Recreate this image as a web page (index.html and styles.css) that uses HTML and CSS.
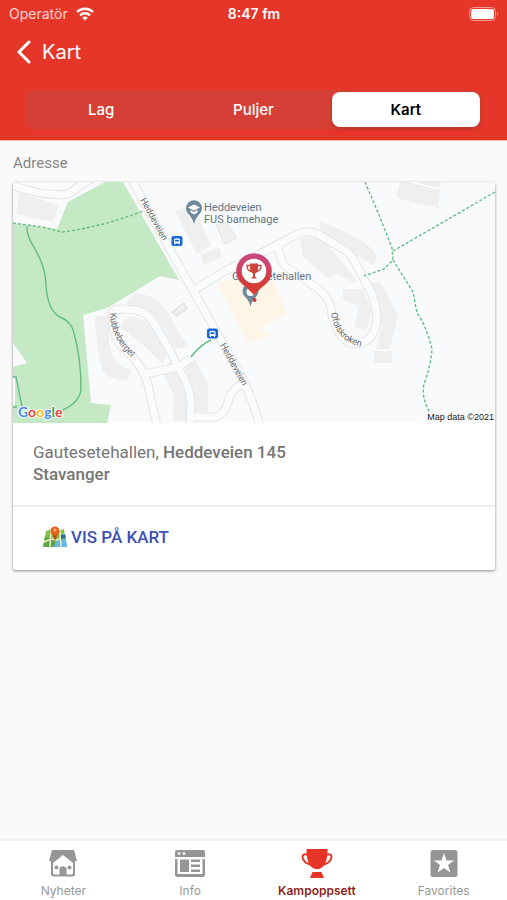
FILE: index.html
```html
<!DOCTYPE html>
<html lang="no">
<head>
    <meta charset="UTF-8">
    <meta name="viewport" content="width=device-width, initial-scale=1.0">
    <title>Kart</title>
    <link rel="stylesheet" href="styles.css">
</head>
<body>
    <header class="header">
        <div class="status-bar">
            <div class="operator">
                <span>Operatör</span>
                <svg width="18" height="14" viewBox="0 0 18 14" fill="none" stroke="#fff" stroke-width="2.4">
                    <path d="M1 5a11.500 11.500 0 0 1 16 0"/>
                    <path d="M4 8.300a7.200 7.200 0 0 1 10 0"/>
                    <path d="M9 13.500L6.200 10.800a4 4 0 0 1 5.600 0z" fill="#fff" stroke="none"/>
                </svg>
            </div>
            <div class="clock">8:47 fm</div>
            <div class="battery">
                <svg width="30" height="14" viewBox="0 0 30 14">
                    <rect x="0.500" y="0.500" width="26" height="13" rx="4" fill="none" stroke="#f4a097"/>
                    <rect x="2" y="2" width="23" height="10" rx="2.500" fill="#fff"/>
                    <path d="M28 5q2 2 0 4z" fill="#f4a097"/>
                </svg>
            </div>
        </div>
        <div class="title-bar">
            <a href="#" class="back" aria-label="Tilbake">
                <svg width="16" height="24" viewBox="0 0 16 24" fill="none" stroke="#fff" stroke-width="3" stroke-linecap="round" stroke-linejoin="round">
                    <path d="M13 2L3 12L13 22"/>
                </svg>
            </a>
            <h1>Kart</h1>
        </div>
        <div class="segments">
            <button type="button">Lag</button>
            <button type="button">Puljer</button>
            <button type="button" class="active">Kart</button>
        </div>
    </header>

    <main class="content">
        <h2>Adresse</h2>
        <div class="card">
            <svg class="map" viewBox="13 182 482 241">
                <defs>
                    <linearGradient id="ring" x1="0" y1="0" x2="0" y2="1">
                        <stop offset="0" stop-color="#c9477f"/>
                        <stop offset="1" stop-color="#d63c35"/>
                    </linearGradient>
                    <path id="kubbe" d="M110 313Q110 341 140 365"/>
                    <path id="ofols" d="M331 313C334 334 345 346 372 348"/>
                    <g id="roads">
                        <path d="M131 178L153 219L190 285L235 365Q250 390 260 426"/>
                        <path d="M196 289Q222 271 252 258L292 237Q308 227 321 236L345 250Q352 255 357 266L372 294Q384 328 366 341Q352 348 343 338Q334 329 330 304Q325 292 310 283L286 267Q281 262 278 246"/>
                        <path d="M114 317Q109 309 122 309Q145 309 152 320L168 347L179 369Q191 388 191 404L190 426"/>
                        <path d="M113 316Q111 341 132 356Q143 368 148 385L157 426"/>
                        <path d="M145 374L178 367L190 359"/>
                        <path d="M191 417H216Q225 414 228 402Q232 386 245 384"/>
                        <path d="M10 184Q32 194 63 195Q70 194 78 187L92 178"/>
                    </g>
                </defs>
                <rect x="13" y="182" width="482" height="241" fill="#f8fafc"/>

                <!-- parks -->
                <path fill="#c5e8c5" d="M13 223L57 229L68 202L105 182H123L179 280L160 276L137 290L107 308L83 315L91 403L111 405L107 423H13V406L15 404V377H13V367L27 363L13 343Z"/>

                <!-- buildings -->
                <g fill="#efefef">
                    <path d="M19 193L59 205L53 222L16 214Z"/>
                    <path d="M175 211L193 204L211 246L197 254Z"/>
                    <path d="M200 254L219 248L222 257L203 265Z"/>
                    <path d="M216 225L226 222L237 238L225 244Z" stroke="#e2e2e2"/>
                    <path d="M126 303L135 293Q155 295 165 308L188 347L175 349L156 317Q145 307 126 306Z"/>
                    <path d="M95 317L109 315V340Q110 365 132 370L127 381Q106 379 102 369Q96 348 95 317Z"/>
                    <path d="M119 326L130 316L146 320L167 352L163 364Q144 344 119 326Z"/>
                    <path d="M172 312L184 303L187 309L177 316Z" stroke="#dcdcdc"/>
                    <path d="M164 374L176 372L187 393L186 421H173L174 396Z"/>
                    <path d="M184 365L195 360L208 384V412H194V391Z"/>
                    <path d="M299 238L322 237L357 281L354 283L338 274L327 278L303 256Z"/>
                    <path d="M321 221L345 232Q373 245 377 257L373 265L349 251L318 235Z"/>
                    <path d="M343 289H363L373 312L366 330L354 327L359 306L343 300Z"/>
                    <path d="M371 283L380 281L398 315L390 349H376L382 326Z"/>
                    <path d="M374 351H392V363H374Z"/>
                    <path d="M400 182H440L439 208L396 198Z"/>
                </g>
                <path fill="#fef5e6" d="M218 284L250 272L272 276L287 313L260 329L271 336L247 343Z"/>

                <!-- roads, casing first -->
                <use href="#roads" fill="none" stroke="#e4e5e7" stroke-width="9"/>
                <use href="#roads" fill="none" stroke="#fafbfc" stroke-width="7"/>
                <path d="M411 182L438 189Q445 185 441 182" fill="none" stroke="#dedfe1" stroke-width="3"/>
                <path d="M411 182L438 189Q445 185 441 182" fill="none" stroke="#fff" stroke-width="2"/>

                <!-- paths -->
                <g fill="none" stroke="#63bd82" stroke-width="1.400">
                    <path d="M27 226Q26 235 35 249Q46 268 46 286Q48 311 60 317Q71 321 74 333Q81 358 81 389Q80 402 63 410"/>
                    <path d="M13 377H16L22 407M13 407H17"/>
                    <path d="M191 357Q200 345 211 340"/>
                    <g stroke-dasharray="3 2">
                        <path d="M13 223L42 227L62 232Q102 227 143 211"/>
                        <path d="M365 182L379 215L392 248L393 260L384 269L364 276"/>
                        <path d="M495 192L393 251"/>
                        <path d="M393 260L413 292L417 313Q426 325 432 349Q431 365 424 384Q421 397 430 413"/>
                    </g>
                </g>

                <!-- bus stops -->
                <g id="stop">
                    <rect x="171.500" y="236" width="11" height="10" rx="2" fill="#1967d2"/>
                    <path d="M174 243.500V239Q177 237.500 180 239V243.500Z" fill="#fff"/>
                    <path d="M175 239.700H179V241.500H175Z" fill="#1967d2"/>
                    <path d="M175 244.500V243M179 244.500V243" stroke="#fff"/>
                </g>
                <use href="#stop" x="35.500" y="92.500"/>

                <!-- place pins -->
                <path fill="#6f8b9b" d="M194 224Q192 217 188 213.500A8 8 0 1 1 200 213.500Q196 217 194 224Z"/>
                <path fill="#fff" d="M188 207.500L194 204.500L200 207.500L194 210.500ZM190.500 210L194 212L197.500 210V212.500L194 214.500L190.500 212.500Z"/>
                <path fill="#6f8b9b" d="M250.500 306.500Q249 300 245 297A8 8 0 1 1 256 297Q252 300 250.500 306.500Z"/>
                <circle cx="250.500" cy="292" r="4" fill="#fff"/>

                <!-- labels -->
                <g class="place">
                    <text x="204" y="211">Heddeveien</text>
                    <text x="204" y="223">FUS barnehage</text>
                    <text x="232" y="280">Gautesetehallen</text>
                </g>
                <g class="street">
                    <text x="140" y="200" transform="rotate(61 140 200)">Heddeveien</text>
                    <text x="220" y="345" transform="rotate(61 220 345)">Heddeveien</text>
                    <text><textPath href="#kubbe">Kubbeberget</textPath></text>
                    <text><textPath href="#ofols">Ofolskroken</textPath></text>
                </g>

                <!-- venue marker -->
                <path d="M245 286L254 295L263 286Z" fill="#d63c35"/>
                <circle cx="254.500" cy="300" r="2" fill="#d63c35"/>
                <circle cx="254" cy="271" r="15" fill="#fff" stroke="url(#ring)" stroke-width="5.500"/>
                <g transform="translate(246 263.500)">
                    <path d="M4 0H12V5Q12 9 9 10V13L11 15H5L7 13V10Q4 9 4 5Z" fill="#d0433c"/>
                    <path d="M4 2H1Q1 7 5 8M12 2H15Q15 7 11 8" fill="none" stroke="#d0433c" stroke-width="1.300"/>
                </g>

                <text class="google" x="18" y="417"><tspan fill="#4285f4">G</tspan><tspan fill="#ea4335">o</tspan><tspan fill="#fbbc05">o</tspan><tspan fill="#4285f4">g</tspan><tspan fill="#34a853">l</tspan><tspan fill="#ea4335">e</tspan></text>
                <text class="copyright" x="494" y="420" text-anchor="end">Map data ©2021</text>
            </svg>
            <p class="address">Gautesetehallen, <strong>Heddeveien 145<br>Stavanger</strong></p>
            <div class="card-actions">
                <a href="#">
                    <svg width="24" height="24" viewBox="0 0 24 24">
                        <path d="M3 6L9 4L16 6L21 4L24 22H0Z" fill="#7fc14b"/>
                        <path d="M2 12L9 13L13 19L12 22H0Z" fill="#5fa444"/>
                        <path d="M13 16L23 14L24 22H11Z" fill="#67b6ea"/>
                        <path d="M1 17L8 14L15 15L22 8M8 5L7 22M17 6L18 22" fill="none" stroke="#e9f0c4" stroke-width="1.500"/>
                        <path d="M18 10L22 9L23 13L18 14Z" fill="#2f6fa8"/>
                        <path d="M12 16L9 8H15Z" fill="#c9401a"/>
                        <circle cx="12" cy="6" r="4.500" fill="#e8621a"/>
                        <circle cx="12" cy="5" r="1.500" fill="#ffb37a"/>
                    </svg>
                    <span>VIS PÅ KART</span>
                </a>
            </div>
        </div>
    </main>

    <nav class="tabs">
        <a href="#">
            <svg width="32" height="32" viewBox="0 0 32 32" fill="#969696">
                <path d="M5 3H27L30 14H28V27Q28 29.500 25.500 29.500H6.500Q4 29.500 4 27V14H2Z"/>
                <path d="M16 8L26 16V26Q26 27.500 24.500 27.500H19.500V21Q16 17.500 12.500 21V27.500H7.500Q6 27.500 6 26V16Z" fill="#fff"/>
                <path d="M13.500 29V21Q16 18.500 18.500 21V29Z"/>
                <circle cx="9.500" cy="20.500" r="2"/>
                <circle cx="22.500" cy="20.500" r="2"/>
            </svg>
            <span>Nyheter</span>
        </a>
        <a href="#">
            <svg width="32" height="32" viewBox="0 0 32 32" fill="#969696">
                <path d="M3 3H29Q31 3 31 5V10H1V5Q1 3 3 3Z"/>
                <circle cx="5" cy="6.500" r="1.300" fill="#fff"/>
                <circle cx="10" cy="6.500" r="1.300" fill="#fff"/>
                <path d="M1 12H3.500V27H28.500V12H31V27.500Q31 30 28.500 30H3.500Q1 30 1 27.500Z"/>
                <path d="M6 12.500H15V25H6ZM17 12.500H26V15H17ZM17 17.500H26V20H17ZM17 22.500H26V25H17Z"/>
            </svg>
            <span>Info</span>
        </a>
        <a href="#" class="active">
            <svg width="32" height="32" viewBox="0 0 32 32">
                <path d="M5.500 2H26.500C26.500 14 24 20 18 22H14C8 20 5.500 14 5.500 2Z" fill="#e63527"/>
                <path d="M7 8Q1.500 6 1.500 10Q2 16 11 18M25 8Q30.500 6 30.500 10Q30 16 21 18" fill="none" stroke="#e63527" stroke-width="2"/>
                <path d="M11.500 25H20.500L23 31H9Z" fill="#e63527"/>
            </svg>
            <span>Kampoppsett</span>
        </a>
        <a href="#">
            <svg width="32" height="32" viewBox="0 0 32 32">
                <rect x="2.500" y="3" width="27" height="27" rx="2.500" fill="#969696"/>
                <path d="M16 6L18.500 13.500H26L20 18L22.300 25.500L16 21L9.700 25.500L12 18L6 13.500H13.500Z" fill="#fff"/>
            </svg>
            <span>Favorites</span>
        </a>
    </nav>
</body>
</html>
```
FILE: styles.css
```css
body {
    margin: 0;
    min-height: 100vh;
    display: flex;
    flex-direction: column;
    font-family: Roboto, "Noto Sans", sans-serif;
    background-color: #fafafa;
    color: #757575;
}
a {
    color: inherit;
    text-decoration: none;
}
svg {
    display: block;
    flex-shrink: 0;
}
.header {
    background-color: #e63629;
    color: #fff;
    font-family: Inter, sans-serif;
    padding-bottom: 11px;
    border-bottom: 1px solid #ffb9b3;
}
.status-bar {
    display: grid;
    grid-template-columns: 1fr auto 1fr;
    align-items: center;
    height: 27px;
    padding: 0 8px 0 9px;
    font-size: 14px;
}
.operator {
    display: flex;
    align-items: center;
    gap: 8px;
    color: #ffd6d2;
}
.clock {
    font-weight: 600;
}
.battery {
    display: flex;
    justify-content: flex-end;
}
.title-bar {
    display: flex;
    align-items: center;
    gap: 10px;
    height: 50px;
    padding-left: 16px;
}
h1 {
    margin: 0;
    font-size: 20px;
    font-weight: 400;
}
.segments {
    display: flex;
    gap: 4px;
    margin: 13px 25px 0;
    padding: 2px;
    border-radius: 9px;
    background-color: #d63f35;
}
.segments button {
    flex: 1;
    height: 35px;
    padding: 0;
    border: none;
    border-radius: 8px;
    background: none;
    color: #fff;
    font-family: inherit;
    font-size: 15px;
    font-weight: 500;
    cursor: pointer;
}
.segments .active {
    background-color: #fff;
    color: #000;
    font-weight: 600;
    box-shadow: 0 2px 4px rgba(0, 0, 0, 0.15);
}
.content {
    flex: 1;
    padding: 12px;
}
h2 {
    margin: 0 0 9px 1px;
    font-size: 15px;
    line-height: 20px;
    font-weight: 400;
    color: #868686;
}
.card {
    margin: 0 0 0 1px;
    background-color: #fff;
    border-radius: 2px;
    overflow: hidden;
    box-shadow: 0 1px 3px rgba(0, 0, 0, 0.45);
}
.map {
    width: 100%;
    height: auto;
}
.place {
    font-size: 11px;
    fill: #657683;
    stroke: #f8fafc;
    stroke-width: 2px;
    paint-order: stroke;
}
.street {
    font-size: 9px;
    fill: #6b6b6b;
}
.google {
    font-family: Lato, sans-serif;
    font-size: 14px;
    font-weight: 700;
    stroke: #fff;
    stroke-width: 2px;
    paint-order: stroke;
}
.copyright {
    font-family: "Liberation Sans", Arial, sans-serif;
    font-size: 9px;
    fill: #222;
}
.address {
    margin: 0;
    padding: 18px 20px 20px;
    font-size: 17px;
    line-height: 22px;
}
.address strong {
    font-weight: 500;
}
.card-actions {
    border-top: 2px solid #eee;
    padding: 18px 30px 21px;
}
.card-actions a {
    display: flex;
    align-items: center;
    gap: 4px;
    color: #3f51b5;
    font-size: 17px;
    font-weight: 500;
}
.tabs {
    display: flex;
    height: 59px;
    border-top: 2px solid #f0f0f0;
    background-color: #fff;
    font-family: Inter, sans-serif;
    font-size: 12px;
    line-height: 16px;
    color: #999;
}
.tabs a {
    flex: 1;
    display: flex;
    flex-direction: column;
    align-items: center;
    gap: 4px;
    padding-top: 6px;
}
.tabs .active {
    color: #8f1f1a;
    font-weight: 600;
}
```
